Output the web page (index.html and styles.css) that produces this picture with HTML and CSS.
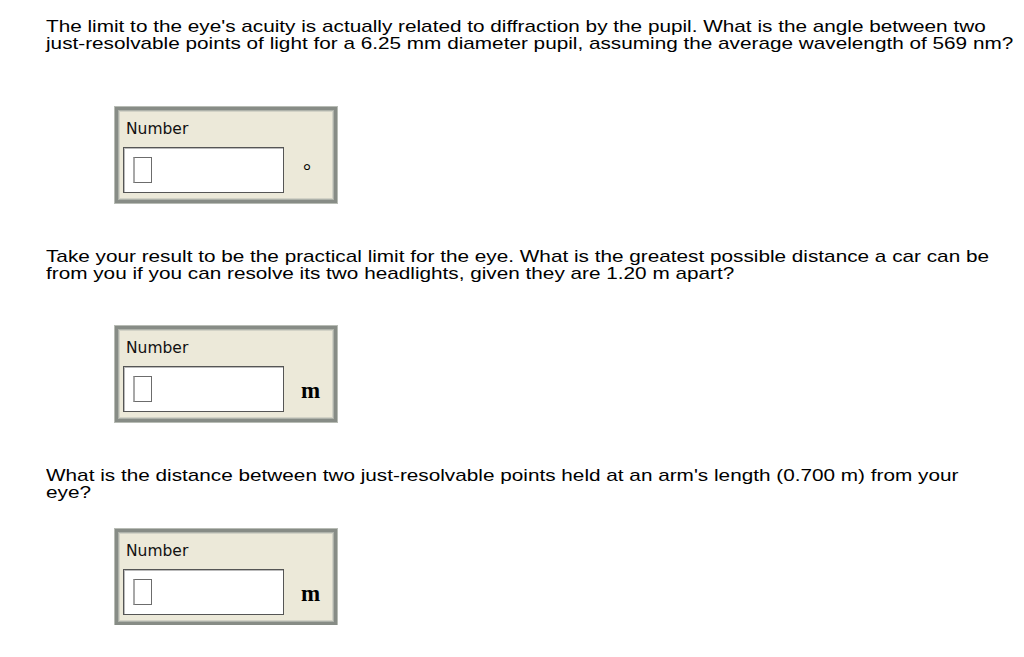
FILE: index.html
```html
<!DOCTYPE html>
<html lang="en">
<head>
    <meta charset="UTF-8">
    <meta name="viewport" content="width=device-width, initial-scale=1.0">
    <title>Diffraction Limit of the Eye</title>
    <link rel="stylesheet" href="styles.css">
</head>
<body>
    <div class="container">
        <div class="question">
            <p class="prompt">The limit to the eye's acuity is actually related to diffraction by the pupil. What is the angle between two<br>just-resolvable points of light for a 6.25 mm diameter pupil, assuming the average wavelength of 569 nm?</p>
            <div class="answer-box gap-lg">
                <div class="label">Number</div>
                <div class="answer-row">
                    <div class="number-input"><span class="placeholder"></span></div>
                    <span class="unit unit-deg">°</span>
                </div>
            </div>
        </div>

        <div class="question">
            <p class="prompt">Take your result to be the practical limit for the eye. What is the greatest possible distance a car can be<br>from you if you can resolve its two headlights, given they are 1.20 m apart?</p>
            <div class="answer-box gap-md">
                <div class="label">Number</div>
                <div class="answer-row">
                    <div class="number-input"><span class="placeholder"></span></div>
                    <span class="unit">m</span>
                </div>
            </div>
        </div>

        <div class="question">
            <p class="prompt">What is the distance between two just-resolvable points held at an arm's length (0.700 m) from your<br>eye?</p>
            <div class="answer-box gap-sm">
                <div class="label">Number</div>
                <div class="answer-row">
                    <div class="number-input"><span class="placeholder"></span></div>
                    <span class="unit">m</span>
                </div>
            </div>
        </div>
    </div>
</body>
</html>
```

FILE: styles.css
```css
body {
    margin: 0;
    background: #ffffff;
    color: #000000;
    font-family: 'Liberation Sans', Arial, sans-serif;
}
.container {
    padding: 18px 0 0 46px;
}
.question + .question {
    margin-top: 45px;
}
/* the question text is drawn wide, like the original capture */
.prompt {
    width: max-content;
    margin: 0;
    font-size: 17px;
    line-height: 17px;
    white-space: nowrap;
    transform: scaleX(1.22);
    transform-origin: left top;
}
.answer-box {
    box-sizing: border-box;
    width: 222px;
    margin-left: 69px;
    padding: 10px 6px 7px 5px;
    background: #ece9d9;
    border: 3px solid #878c86;
    box-shadow: 0 0 0 1px #b8bcb5, inset 0 0 0 1px #aeb2aa, inset 0 0 0 2px #d2d2c6;
}
.gap-lg { margin-top: 55px; }
.gap-md { margin-top: 44px; }
.gap-sm { margin-top: 28px; }
.label {
    font-family: 'DejaVu Sans', Verdana, sans-serif;
    font-size: 15.5px;
    line-height: 18px;
    padding-left: 3px;
    color: #111;
}
.answer-row {
    display: flex;
    align-items: flex-start;
    margin-top: 9px;
}
.number-input {
    box-sizing: border-box;
    width: 161px;
    height: 46px;
    padding: 9px 0 0 9px;
    background: #fff;
    border: 1px solid #555;
    box-shadow: inset 1px 1px 0 #bbb;
}
.placeholder {
    display: block;
    box-sizing: border-box;
    width: 19px;
    height: 26px;
    border: 1px solid #6c6c6c;
    border-left: 2px solid #a8a8a8;
}
.unit {
    margin: 14px 0 0 17px;
    font-family: 'Liberation Serif', 'Times New Roman', serif;
    font-weight: bold;
    font-size: 23px;
    line-height: 21px;
}
.unit-deg {
    margin-left: 19px;
    font-weight: normal;
    font-size: 20px;
}
```
